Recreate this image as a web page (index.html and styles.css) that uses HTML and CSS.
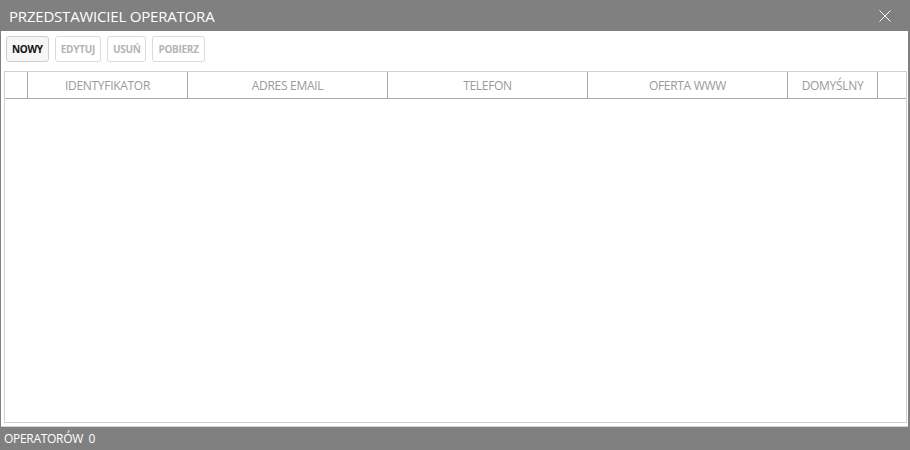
FILE: index.html
```html
<!DOCTYPE html>
<html lang="pl">
<head>
<meta charset="utf-8">
<title>Przedstawiciel operatora</title>
<link rel="stylesheet" href="styles.css">
</head>
<body>
<div class="window">
  <div class="titlebar">
    <span class="title">PRZEDSTAWICIEL OPERATORA</span>
    <span class="close" aria-label="Zamknij">
      <svg width="12" height="12" viewBox="0 0 12 12"><path d="M0.5 0.5 L11.5 11.5 M11.5 0.5 L0.5 11.5" stroke="#fff" stroke-width="1" fill="none"/></svg>
    </span>
  </div>
  <div class="content">
    <div class="toolbar">
      <button class="btn active">NOWY</button>
      <button class="btn">EDYTUJ</button>
      <button class="btn">USUŃ</button>
      <button class="btn">POBIERZ</button>
    </div>
    <div class="grid">
      <div class="head">
        <div class="col c0"></div>
        <div class="col c1">IDENTYFIKATOR</div>
        <div class="col c2">ADRES EMAIL</div>
        <div class="col c3">TELEFON</div>
        <div class="col c4">OFERTA WWW</div>
        <div class="col c5">DOMYŚLNY</div>
        <div class="col c6"></div>
      </div>
      <div class="body"></div>
    </div>
  </div>
  <div class="status">OPERATORÓW&nbsp;&nbsp;0</div>
</div>
</body>
</html>
```
FILE: styles.css
```css
html, body {
  margin: 0;
  padding: 0;
  background: #808080;
}
body {
  width: 910px;
  height: 450px;
  overflow: hidden;
  font-family: "Open Sans", "Noto Sans", sans-serif;
}
.window {
  display: flex;
  flex-direction: column;
  height: 450px;
  background: #808080;
}
.titlebar {
  height: 31px;
  flex: none;
  display: flex;
  align-items: center;
  justify-content: space-between;
  padding: 0 19px 0 9px;
  color: #fff;
}
.title {
  font-size: 15px;
  letter-spacing: -0.2px;
  padding-top: 1px;
}
.close {
  display: flex;
  width: 12px;
  height: 12px;
}
.content {
  flex: 1;
  margin: 0 2px 0 1px;
  background: #fff;
  display: flex;
  flex-direction: column;
  padding: 5px 1px 3px 3px;
  border-bottom: 1px solid #d4d4d4;
}
.toolbar {
  display: flex;
  gap: 6px;
  padding-left: 2px;
  height: 26px;
  margin-bottom: 9px;
}
.btn {
  font-family: "Open Sans", "Noto Sans", sans-serif;
  font-size: 10px;
  font-weight: 700;
  color: #b4b4b4;
  background: #fff;
  border: 1px solid #dcdcdc;
  border-radius: 3px;
  padding: 0 5px;
  height: 26px;
  letter-spacing: -0.3px;
}
.btn.active {
  color: #111;
  background: #f6f6f6;
  border-color: #cfcfcf;
}
.grid {
  flex: 1;
  border: 1px solid #cfd3cb;
  display: flex;
  flex-direction: column;
}
.head {
  display: flex;
  height: 26px;
  border-bottom: 1px solid #a6ae9c;
  font-size: 12px;
  color: #9a9a9a;
}
.col {
  display: flex;
  align-items: center;
  justify-content: center;
  border-right: 1px solid #a6ae9c;
  box-sizing: border-box;
  letter-spacing: -0.3px;
}
.c0 { width: 23px; }
.c1 { width: 160px; }
.c2 { width: 200px; }
.c3 { width: 200px; }
.c4 { width: 200px; }
.c5 { width: 90px; }
.c6 { flex: 1; border-right: none; }
.body {
  flex: 1;
}
.status {
  height: 23px;
  flex: none;
  display: flex;
  align-items: center;
  padding-left: 4px;
  color: #fff;
  font-size: 12px;
  letter-spacing: -0.3px;
}
```
